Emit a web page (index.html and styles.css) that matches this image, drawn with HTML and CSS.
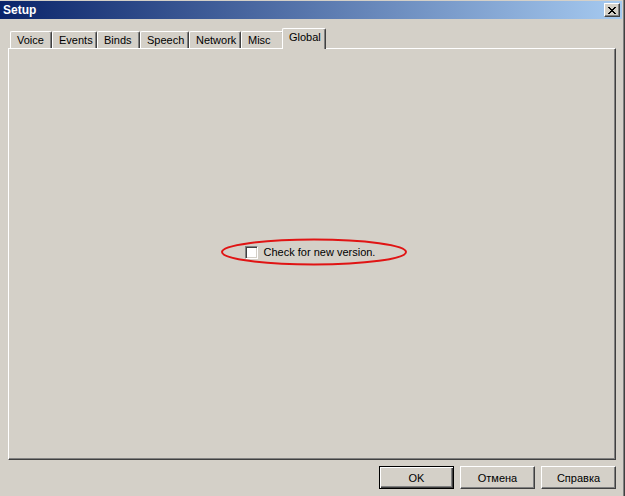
FILE: index.html
```html
<!DOCTYPE html>
<html>
<head>
<meta charset="utf-8">
<title>Setup</title>
<link rel="stylesheet" href="styles.css">
</head>
<body>
<div class="window">
  <div class="titlebar">
    <span class="title">Setup</span>
    <div class="close">
      <svg width="8" height="7" viewBox="0 0 8 7" shape-rendering="crispEdges"><path d="M0 0h2v1h-2z M6 0h2v1h-2z M1 1h2v1h-2z M5 1h2v1h-2z M2 2h4v1h-4z M3 3h2v1h-2z M2 4h4v1h-4z M1 5h2v1h-2z M5 5h2v1h-2z M0 6h2v1h-2z M6 6h2v1h-2z" fill="#000"/></svg>
    </div>
  </div>
  <div class="tabs">
    <div class="tab tab-voice">Voice</div>
    <div class="tab tab-events">Events</div>
    <div class="tab tab-binds">Binds</div>
    <div class="tab tab-speech">Speech</div>
    <div class="tab tab-network">Network</div>
    <div class="tab tab-misc">Misc</div>
    <div class="tab tab-global selected">Global</div>
  </div>
  <div class="panel">
    <label class="check">
      <span class="box"></span>
      <span class="label">Check for new version.</span>
    </label>
    <svg class="mark" width="190" height="32" viewBox="0 0 190 32"><ellipse cx="94" cy="16" rx="92" ry="12.5" fill="none" stroke="#e01414" stroke-width="2"/></svg>
  </div>
  <div class="buttons">
    <button class="btn default">OK</button>
    <button class="btn">Отмена</button>
    <button class="btn">Справка</button>
  </div>
</div>
</body>
</html>
```
FILE: styles.css
```css
html, body {
  margin: 0;
  padding: 0;
  background: #d4d0c8;
}
body {
  font-family: "Liberation Sans", Arial, sans-serif;
  font-size: 11px;
  color: #000;
}
.window {
  width: 625px;
  height: 496px;
  box-sizing: border-box;
  background: #d4d0c8;
  border-right: 1px solid #404040;
  box-shadow: inset -1px 0 #808080;
  display: flex;
  flex-direction: column;
}
.titlebar {
  margin: 1px 2px 0 0;
  height: 18px;
  background: linear-gradient(to right, #0a246a, #a6caf0);
  display: flex;
  align-items: center;
  justify-content: space-between;
}
.title {
  color: #fff;
  font-weight: bold;
  font-size: 12px;
  padding-left: 3px;
  line-height: 18px;
}
.close {
  width: 16px;
  height: 14px;
  box-sizing: border-box;
  margin-right: 2px;
  background: #d4d0c8;
  border: 1px solid;
  border-color: #fff #404040 #404040 #fff;
  box-shadow: inset -1px -1px #808080;
  display: flex;
  align-items: center;
  justify-content: center;
  padding-right: 1px;
}
.close svg { display: block; }
.tabs {
  margin-top: 9px;
  height: 20px;
  padding-left: 10px;
  display: flex;
  align-items: flex-end;
}
.tab {
  height: 17px;
  box-sizing: border-box;
  padding: 2px 0 0 6px;
  line-height: 13px;
  border-left: 1px solid #fff;
  border-top: 1px solid #fff;
  border-right: 1px solid #404040;
  border-radius: 2px 2px 0 0;
  box-shadow: inset -1px 0 #808080;
  background: #d4d0c8;
  white-space: nowrap;
}
.tab-voice { width: 42px; }
.tab-events { width: 45px; }
.tab-binds { width: 43px; }
.tab-speech { width: 49px; }
.tab-network { width: 52px; }
.tab-misc { width: 43px; }
.tab-global { width: 44px; }
.tab.selected {
  height: 21px;
  margin-left: -2px;
  margin-bottom: -1px;
  position: relative;
  z-index: 1;
}
.panel {
  position: relative;
  margin-left: 8px;
  width: 608px;
  height: 412px;
  box-sizing: border-box;
  border-top: 1px solid #fff;
  border-left: 1px solid #fff;
  border-right: 1px solid #404040;
  border-bottom: 1px solid #404040;
  box-shadow: inset -1px -1px #808080;
  display: flex;
  align-items: center;
  justify-content: center;
}
.check {
  display: flex;
  align-items: center;
  gap: 6px;
  margin: 0 4px 3px 0;
}
.box {
  width: 13px;
  height: 13px;
  box-sizing: border-box;
  background: #fff;
  border: 1px solid;
  border-color: #808080 #fff #fff #808080;
  box-shadow: inset 1px 1px #404040, inset -1px -1px #d4d0c8;
}
.label {
  line-height: 13px;
}
.mark {
  position: absolute;
  left: 211px;
  top: 187px;
}
.buttons {
  margin-top: 6px;
  padding-right: 8px;
  display: flex;
  justify-content: flex-end;
  gap: 6px;
}
.btn {
  width: 75px;
  height: 23px;
  box-sizing: border-box;
  margin: 0;
  padding: 0;
  font-family: "Liberation Sans", Arial, sans-serif;
  font-size: 11px;
  color: #000;
  background: #d4d0c8;
  border: 1px solid;
  border-color: #fff #404040 #404040 #fff;
  box-shadow: inset -1px -1px #808080;
  border-radius: 0;
}
.btn.default {
  border-color: #000;
  box-shadow: inset 1px 1px #fff, inset -1px -1px #404040, inset -2px -2px #808080;
}
```
